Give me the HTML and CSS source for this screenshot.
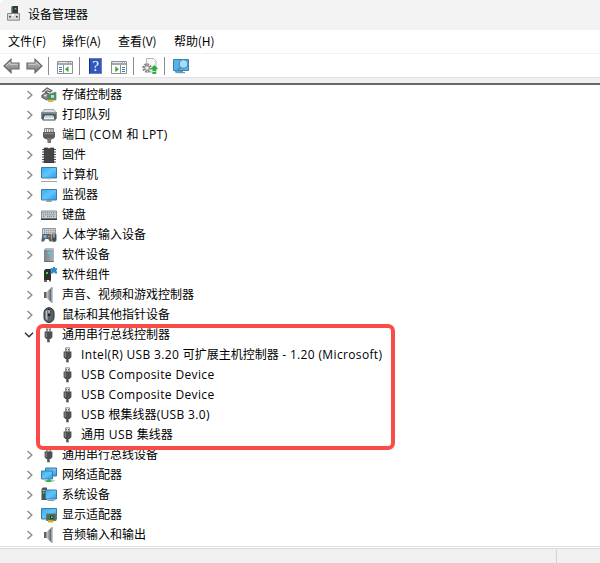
FILE: index.html
```html
<!DOCTYPE html>
<html lang="zh-CN">
<head>
<meta charset="utf-8">
<title>设备管理器</title>
<link rel="stylesheet" href="styles.css">
</head>
<body>
<svg class="defs" aria-hidden="true">
  <defs>
    <linearGradient id="screen" x1="0" y1="0" x2="1" y2="1"><stop offset="0" stop-color="#35a9ee"/><stop offset=".5" stop-color="#62c5ff"/><stop offset="1" stop-color="#2699e8"/></linearGradient>
    <linearGradient id="arrowfill" x1="0" y1="0" x2="0" y2="1"><stop offset="0" stop-color="#c0c0c0"/><stop offset="1" stop-color="#777"/></linearGradient>
    <linearGradient id="steel" x1="0" y1="0" x2="1" y2="0"><stop offset="0" stop-color="#78838b"/><stop offset="1" stop-color="#aab4bb"/></linearGradient>
    <linearGradient id="horn" x1="0" y1="0" x2="1" y2="0"><stop offset="0" stop-color="#d5d9dc"/><stop offset="1" stop-color="#596066"/></linearGradient>
    <symbol id="closed" viewBox="0 0 8 10"><path d="M1.5 1 5.8 5 1.5 9" fill="none" stroke="#8f8f8f" stroke-width="1.5"/></symbol>
    <symbol id="open" viewBox="0 0 10 8"><path d="M1 1.8 5 5.8 9 1.8" fill="none" stroke="#303030" stroke-width="1.4"/></symbol>
    <symbol id="usb" viewBox="0 0 16 16"><path d="M5.5.8h4v4h-4z" fill="#ededed" stroke="#959595"/><path d="M6 2h1v1.4H6zm2 0h1v1.4H8z" fill="#666"/><path d="M3.6 4.6h7.8v5.6L9.6 12H5.4l-1.8-1.8z" fill="#4c5052"/><path d="M4.6 5.4h1.4v4.6H4.6z" fill="#7b8080"/><path d="M6.2 11.5h2.6v3.8H6.2z" fill="#4d4d4d"/><path d="M8 12h.8v3.3H8z" fill="#999"/></symbol>
    <symbol id="storage" viewBox="0 0 16 16"><path d="M1.2 5 6 .9l4.8 2.6L9 5 6.2 3.6 4.4 5l4 2.3" fill="#e4e4e4" stroke="#5c5c5c" stroke-width="1.2"/><path d="M.8 8.2 5 5.6l3 1.6v4.5L5.6 13 .8 10.4z" fill="#858585" stroke="#4a4a4a" stroke-width=".8"/><path d="m2.5 8.5 2.6-1.3 2 1.2-2.4 1.4z" fill="#ddd"/><path d="M6 7.8 15 5v8H6z" fill="#3f8f63" stroke="#7c8a80" stroke-width=".8"/><path d="M10 8h3v3h-3z" fill="#c5d8c7"/><path d="M7 12.8h5.3V15H7z" fill="#e4b43c"/></symbol>
    <symbol id="printer" viewBox="0 0 16 16"><path d="M3 2.5h10l2 3H1z" fill="#d9dee0" stroke="#858b8e" stroke-width=".7"/><path d="M.3 5h15.4v7H.3z" fill="#5b6165"/><path d="M1 5.4h14v1H1z" fill="#a8afb3"/><path d="M3.5 8h9l1.8 5H1.7z" fill="#f3f5f6" stroke="#454a4c"/><path d="m3.8 9-.8 2h10l-.8-2z" fill="#b7dce9"/><path d="M12 5.5h2v1h-2z" fill="#39d26a"/></symbol>
    <symbol id="port" viewBox="0 0 16 16"><path d="M3.5 1.5h9v4h-9z" fill="#e4e4e4" stroke="#888"/><path d="M5.5 2v3m2-3v3m2-3v3m1.5-3v3" stroke="#888" stroke-width=".8"/><path d="M2 5h12v5l-2 2H4l-2-2z" fill="#5b5b5b"/><path d="M3 6h10v1.3H3z" fill="#858585"/><path d="M4.5 11h7l-1.5 2.5V16H6.5v-2.5z" fill="#777"/></symbol>
    <symbol id="firmware" viewBox="0 0 16 16"><path d="M1 2.5h14M1 5h14M1 7.5h14M1 10h14M1 12.5h14M1 15h14" stroke="#555" stroke-width="1.2"/><path d="M3.3 1h3.2q1.5 2 3 0h3.2v15H3.3z" fill="#454545" stroke="#222" stroke-width=".7"/></symbol>
    <symbol id="computer" viewBox="0 0 16 16"><path d="M.5 .5h15v10.5H.5z" fill="url(#screen)" stroke="#427c9c"/><path d="M6 11.5h4v1H6z" fill="#bdc8cf"/><path d="M0 14h16v1H0z" fill="#96a8b4"/></symbol>
    <symbol id="monitor" viewBox="0 0 16 16"><path d="M.5 2.5h15V13H.5z" fill="url(#screen)" stroke="#427c9c"/><path d="M6.7 13.3h2.6v.5H11v1H5v-1h1.7z" fill="#758b98"/></symbol>
    <symbol id="keyboard" viewBox="0 0 16 16"><path d="M.5 4h15v8H.5z" fill="#cbd0d3" stroke="#8b9195"/><path d="M1.5 5.8h13M2 7.8h12M2 9.7h2m2 0h5m1 0h2" stroke="#737b80" stroke-dasharray="1.3 .8"/><path d="M0 11.5h16V13H0z" fill="#34383b"/></symbol>
    <symbol id="hid" viewBox="0 0 16 16"><path d="M1.5 1.5h13v7h-13z" fill="#d6d9db" stroke="#92999d"/><path d="M3 3.2h11M3 5.2h11M3 7h11" stroke="#737c82" stroke-dasharray="1.2 .9"/><path d="M1.5 7h8l2 7.5H8.6L7.3 12h-3L3 14.5H.2z" fill="#596067"/><path d="M2.5 8h3v3h-3z" fill="#63b8e9"/><path d="M7 8.5h1.8v1.8H7z" fill="#e66b43"/><rect x="10.8" y="6.2" width="4.7" height="8.8" rx="2.3" fill="#444a50" stroke="#aaa" stroke-width=".6"/><path d="M13 7v3.5" stroke="#dfe4e7"/></symbol>
    <symbol id="softdev" viewBox="0 0 16 16"><path d="m3 3 2-2h7l1 2v12H3z" fill="url(#steel)"/><path d="m3 3 2-2h7l1 2z" fill="#b2bcc2"/><path d="M3.5 14h9v1h-9z" fill="#666f75"/><circle cx="8" cy="6" r="1.3" fill="#36d9f2"/></symbol>
    <symbol id="softcomp" viewBox="0 0 16 16"><path d="M3 3.5 4.5 2H10v11H3z" fill="#2e3030"/><path d="M3 13h3v2H3zm5 0h2v1.5H8z" fill="#656565"/><path d="M5 5h2v2H5z" fill="#38dd56"/><path d="M9.5 1.2H12V0h2v1.2h2v2h-1v1h1v2.3h-2.2V5.6h-1.5v.9H9.5V4.3h1v-1h-1z" fill="#268bc5"/></symbol>
    <symbol id="sound" viewBox="0 0 16 16"><path d="M3 5h3v6H3z" fill="#596066"/><path d="M5.5 5 10 1v14l-4.5-4z" fill="url(#horn)"/><path d="M10 .3h1.7v15.4H10z" fill="#8b9297"/><path d="M11.2 1.5v13" stroke="#c8ced2"/></symbol>
    <symbol id="mouse" viewBox="0 0 16 16"><rect x="3" y=".7" width="10" height="14.8" rx="5" fill="#596066" stroke="#292d30"/><path d="M4.5 4.5v6q0 2 2 3V2.5z" fill="#b3bac0"/><path d="M8 2v7" stroke="#202326" stroke-width="2.4"/><path d="M8 3v3.5" stroke="#e4e8eb" stroke-width="1.3"/></symbol>
    <symbol id="network" viewBox="0 0 16 16"><path d="M4.5 1h11v8h-11z" fill="url(#screen)" stroke="#427c9c"/><path d="M.5 4h11v8H.5z" fill="url(#screen)" stroke="#427c9c"/><path d="M3.5 13h10v1.6h-10z" fill="#9bd4a4"/><path d="M6.8 12h2v1.2h1.5V15H5.3v-1.8h1.5z" fill="#39ac4e"/></symbol>
    <symbol id="system" viewBox="0 0 16 16"><path d="m.5 2 1.5-1.5h4V13H.5z" fill="#4c5357"/><path d="M1.5 3h3v1h-3z" fill="#b7bec2"/><path d="M2 5h1.5v1.5H2z" fill="#40d761"/><path d="M4.5 3h11v9h-11z" fill="url(#screen)" stroke="#427c9c"/><path d="M8.5 12.5h3v.5h2v1h-7v-1h2z" fill="#8d9ba4"/></symbol>
    <symbol id="display" viewBox="0 0 16 16"><path d="M.5 1.5h15v10.5H.5z" fill="url(#screen)" stroke="#427c9c"/><path d="M5.5 7H15v6.5H5.5z" fill="#3f7754" stroke="#65796c"/><path d="M9 8.5h3.5V12H9z" fill="#203f31"/><path d="M10 9.5h1.5V11H10z" fill="#b6d2bc"/><path d="M7 13.2h5.5v2.3H7z" fill="#e4a72b"/></symbol>
  </defs>
</svg>
<div class="window">
  <header class="titlebar">
    <svg class="app-icon" viewBox="0 0 16 16"><path d="M6 0h6v8H6z" fill="#343838"/><path d="m5 1 1.5-1v8H5z" fill="#858585"/><path d="M8.7 2h1.6v1.6H8.7z" fill="#45d35e"/><path d="M1.5 7.5h12v6.7h-12z" fill="#d7d9da" stroke="#868a8c"/><path d="M6 8h2v2H6z" fill="#fff"/><path d="M3.2 10h1.6v1.5H3.2zm6.8 0h1.6v1.5H10z" fill="#333"/></svg>
    <h1>设备管理器</h1>
  </header>
  <nav class="menubar"><span>文件(F)</span><span>操作(A)</span><span>查看(V)</span><span>帮助(H)</span></nav>
  <div class="toolbar">
    <svg class="arrow" viewBox="0 0 17 16"><path d="M1 8 8 1.3V5h8v6H8v3.7z" fill="url(#arrowfill)" stroke="#696969" stroke-width="1.2"/><path d="M3 8 7 4.2V6.3h7.5" fill="none" stroke="#d0d0d0"/></svg>
    <svg class="arrow next" viewBox="0 0 17 16"><path d="M16 8 9 1.3V5H1v6h8v3.7z" fill="url(#arrowfill)" stroke="#696969" stroke-width="1.2"/><path d="M2.5 6.3H10V4.2L14 8" fill="none" stroke="#d0d0d0"/></svg>
    <i class="sep s1"></i>
    <svg class="panel" viewBox="0 0 16 13"><path d="M.5.5h15v12H.5z" fill="#fff" stroke="#8b9197"/><path d="M1 1h14v3H1z" fill="#a2aab1"/><path d="M1.5 1.5h9" stroke="#e8ebed"/><path d="M12 1.5h3" stroke="#fff" stroke-dasharray="1"/><path d="M6.5 4v8.5" stroke="#8b9197"/><path d="M2 6.5h3M2 8.5h3M2 10.5h3" stroke="#397dbd"/><path d="M11.5 5.3v6L8 8.3z" fill="#33a52b"/></svg>
    <i class="sep s2"></i>
    <span class="help">?</span>
    <svg class="panel list" viewBox="0 0 16 13"><path d="M.5.5h15v12H.5z" fill="#fff" stroke="#8b9197"/><path d="M1 1h14v3H1z" fill="#a2aab1"/><path d="M1.5 1.5h9" stroke="#e8ebed"/><path d="M12 1.5h3" stroke="#fff" stroke-dasharray="1"/><path d="M9.5 4v8.5" stroke="#8b9197"/><path d="M11 6.5h3m-3 2h3m-3 2h3" stroke="#397dbd"/><path d="M4.3 5.3v6L7.8 8.3z" fill="#33a52b"/></svg>
    <i class="sep s3"></i>
    <svg class="update" viewBox="0 0 17 17"><path d="M4.5.5h7l2.5 2.5v11H4.5z" fill="#f8f8f8" stroke="#b5b5b5"/><circle cx="5" cy="10" r="3.5" fill="none" stroke="#888" stroke-width="2.5" stroke-dasharray="1.8 .9"/><circle cx="5" cy="10" r="2.3" fill="#eee" stroke="#888"/><path d="m12.3 7 3.9 4h-2v2h-3.8v-2H8.4zM10.4 14h3.8v2h-3.8z" fill="#20b538"/></svg>
    <i class="sep s4"></i>
    <svg class="scan" viewBox="0 0 18 17"><path d="M1.5 1.5h15v11h-15z" fill="#53b5ec" stroke="#427c9c"/><path d="M6 13h5v1h2v1.2H5V14h1z" fill="#5da0c4"/><path d="m8.5 9-5 5.5" stroke="#4f91b9" stroke-width="2"/><circle cx="11.5" cy="6" r="4.3" fill="#a5dcfa" stroke="#4b94c0" stroke-width="1.2"/></svg>
  </div>
  <div class="toolbar-edge"></div>
  <main class="tree">
    <div class="row"><svg class="chev"><use href="#closed"/></svg><svg class="icon"><use href="#storage"/></svg><span>存储控制器</span></div>
    <div class="row"><svg class="chev"><use href="#closed"/></svg><svg class="icon"><use href="#printer"/></svg><span>打印队列</span></div>
    <div class="row"><svg class="chev"><use href="#closed"/></svg><svg class="icon"><use href="#port"/></svg><span>端口<b class="latin com"> (COM </b>和<b class="latin com"> LPT)</b></span></div>
    <div class="row"><svg class="chev"><use href="#closed"/></svg><svg class="icon"><use href="#firmware"/></svg><span>固件</span></div>
    <div class="row"><svg class="chev"><use href="#closed"/></svg><svg class="icon"><use href="#computer"/></svg><span>计算机</span></div>
    <div class="row"><svg class="chev"><use href="#closed"/></svg><svg class="icon"><use href="#monitor"/></svg><span>监视器</span></div>
    <div class="row"><svg class="chev"><use href="#closed"/></svg><svg class="icon"><use href="#keyboard"/></svg><span>键盘</span></div>
    <div class="row"><svg class="chev"><use href="#closed"/></svg><svg class="icon"><use href="#hid"/></svg><span>人体学输入设备</span></div>
    <div class="row"><svg class="chev"><use href="#closed"/></svg><svg class="icon"><use href="#softdev"/></svg><span>软件设备</span></div>
    <div class="row"><svg class="chev"><use href="#closed"/></svg><svg class="icon"><use href="#softcomp"/></svg><span>软件组件</span></div>
    <div class="row"><svg class="chev"><use href="#closed"/></svg><svg class="icon"><use href="#sound"/></svg><span>声音、视频和游戏控制器</span></div>
    <div class="row"><svg class="chev"><use href="#closed"/></svg><svg class="icon"><use href="#mouse"/></svg><span>鼠标和其他指针设备</span></div>
    <section class="group">
      <div class="row"><svg class="chev expanded"><use href="#open"/></svg><svg class="icon"><use href="#usb"/></svg><span>通用串行总线控制器</span></div>
      <div class="row child"><svg class="icon"><use href="#usb"/></svg><span><b class="latin">Intel(R) USB 3.20 </b>可扩展主机控制器<b class="latin"> - 1.20 (Microsoft)</b></span></div>
      <div class="row child"><svg class="icon"><use href="#usb"/></svg><span><b class="latin">USB Composite Device</b></span></div>
      <div class="row child"><svg class="icon"><use href="#usb"/></svg><span><b class="latin">USB Composite Device</b></span></div>
      <div class="row child"><svg class="icon"><use href="#usb"/></svg><span><b class="latin">USB </b>根集线器<b class="latin">(USB 3.0)</b></span></div>
      <div class="row child"><svg class="icon"><use href="#usb"/></svg><span>通用<b class="latin com"> USB </b>集线器</span></div>
      <div class="highlight"></div>
    </section>
    <div class="row"><svg class="chev"><use href="#closed"/></svg><svg class="icon"><use href="#usb"/></svg><span>通用串行总线设备</span></div>
    <div class="row"><svg class="chev"><use href="#closed"/></svg><svg class="icon"><use href="#network"/></svg><span>网络适配器</span></div>
    <div class="row"><svg class="chev"><use href="#closed"/></svg><svg class="icon"><use href="#system"/></svg><span>系统设备</span></div>
    <div class="row"><svg class="chev"><use href="#closed"/></svg><svg class="icon"><use href="#display"/></svg><span>显示适配器</span></div>
    <div class="row"><svg class="chev"><use href="#closed"/></svg><svg class="icon"><use href="#sound"/></svg><span>音频输入和输出</span></div>
  </main>
  <footer class="status"><i></i></footer>
</div>
</body>
</html>
```
FILE: styles.css
```css
* { box-sizing: border-box; }
body { margin: 0; background: #fff; color: #000; font: 12px/20px "Noto Sans CJK SC", sans-serif; }
.defs { position: absolute; width: 0; height: 0; }
.window { width: 600px; height: 563px; display: flex; flex-direction: column; overflow: hidden; }
.titlebar { height: 30px; flex: none; display: flex; align-items: center; padding: 0 0 2px 6px; background: #f3f3f3; border-top-left-radius: 5px; }
.app-icon { width: 16px; height: 16px; margin-right: 6px; }
h1 { margin: 0; font-size: 12px; font-weight: 400; line-height: 20px; }
.menubar { height: 23px; flex: none; display: flex; gap: 16px; padding: 1px 0 0 8px; line-height: 20px; }
.menubar span { width: 40px; white-space: nowrap; letter-spacing: -.1px; }
.menubar span:first-child { width: 38px; }
.toolbar { height: 24px; flex: none; display: flex; align-items: center; padding: 1px 0 0 3px; border-top: 1px solid #eef3fa; }
.toolbar svg { flex: none; }
.arrow { width: 17px; height: 16px; }
.next { margin-left: 6px; }
.sep { width: 1px; height: 18px; background: #8c8c8c; flex: none; }
.s1 { margin: 0 8px 0 5px; }
.panel { width: 16px; height: 13px; margin-top: 3px; }
.s2 { margin: 0 9px 0 6px; }
.help { width: 13px; height: 16px; background: #3158b8; border: 1px solid #6382cc; border-left-color: #153384; color: #fff; font: 15px/15px "Liberation Serif", serif; text-align: center; }
.list { margin-left: 9px; }
.s3 { margin: 0 8px 0 6px; }
.update { width: 17px; height: 17px; }
.s4 { margin: 0 7px 0 5px; }
.scan { width: 18px; height: 17px; }
.toolbar-edge { height: 8px; flex: none; background: #f0f0f0; border-top: 1px solid #e3e3e3; border-bottom: 2px solid #696969; }
.tree { height: 463px; flex: none; }
.row { height: 20px; display: flex; align-items: center; padding-left: 26px; white-space: nowrap; }
.row > svg { flex: none; }
.row > span { height: 20px; line-height: 18px; }
.chev { width: 8px; height: 10px; margin-right: 7px; }
.expanded { width: 10px; height: 8px; margin: 0 7px 0 -2px; }
.icon { width: 16px; height: 16px; margin-right: 5px; }
.child { padding-left: 60px; }
.latin { font-family: "Open Sans", sans-serif; font-weight: 400; letter-spacing: .35px; }
.com { letter-spacing: .5px; }
.group { position: relative; }
.highlight { position: absolute; left: 36px; top: -1px; width: 359px; height: 126px; border: 4px solid #fb4b47; border-radius: 7px; }
.status { flex: 1; background: #f0f0f0; border-top: 1px solid #d7d7d7; box-shadow: 0 -1px #fff, 0 -2px #dedede; padding-top: 1px; }
.status i { display: block; width: 1px; height: 100%; margin-left: 556px; background: #d2d2d2; }
```
